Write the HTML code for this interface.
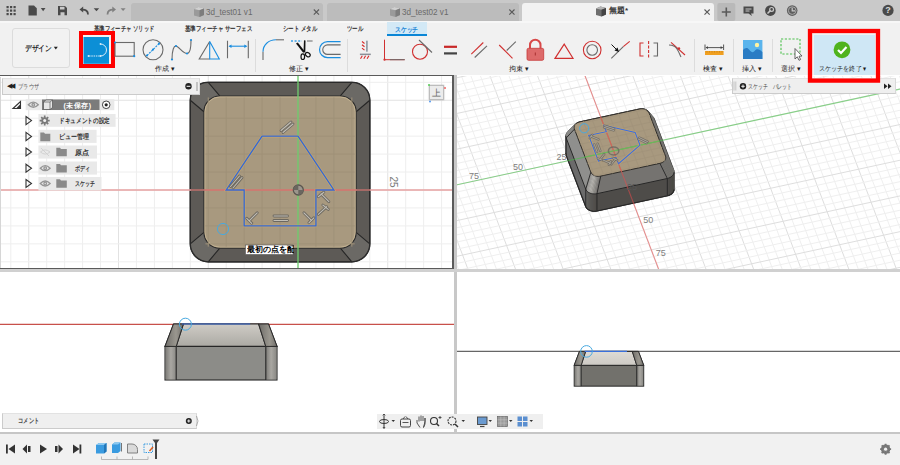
<!DOCTYPE html><html><head><meta charset="utf-8"><style>*{box-sizing:border-box;margin:0;padding:0}
html,body{width:900px;height:465px;overflow:hidden;background:#fff;font-family:"Liberation Sans",sans-serif;}
.a{position:absolute}
#top{left:0;top:0;width:900px;height:21px;background:#c9c9c9}
.tab{top:3px;height:18px;background:#bbbbbb;border-radius:3px 3px 0 0}
.tabt{font-size:9px;color:#6a6a6a;top:7px;white-space:nowrap;line-height:10px}
.x{font-size:9px;color:#555;top:5px;line-height:10px}
#rib{left:0;top:21px;width:900px;height:54px;background:#f1f1f1;border-top:2px solid #f7f7f7}
.rt{font-size:7px;color:#333;font-weight:bold;top:24px;line-height:9px;white-space:nowrap}
.gl{font-size:7px;color:#1a1a1a;top:64px;line-height:9px;white-space:nowrap}
.sep{width:1px;top:39px;height:33px;background:#dcdcdc}
#vsep{left:454px;top:75px;width:3px;height:357px;background:#c8c8c8}
#hsep{left:0;top:269px;width:900px;height:3px;background:#d0d0d0}
#tline{left:0;top:432px;width:900px;height:2px;background:#c6c6c6}
#tbar{left:0;top:434px;width:900px;height:31px;background:#f1f1f1}
.pnl{background:#efefef;border:1px solid;border-color:#e2e2e2 #d8d8d8 #cbcbcb #cbcbcb}
.tr{font-size:7px;color:#333;font-weight:bold;line-height:9px;white-space:nowrap}
.rowbg{background:#ececec}
</style></head><body>
<div class="a" id="top"></div>
<svg class="a" style="left:0;top:0" width="900" height="21">
<g fill="#4a4a4a">
<rect x="6.5" y="6" width="2.2" height="2.2"/><rect x="10" y="6" width="2.2" height="2.2"/><rect x="13.5" y="6" width="2.2" height="2.2"/>
<rect x="6.5" y="9.5" width="2.2" height="2.2"/><rect x="10" y="9.5" width="2.2" height="2.2"/><rect x="13.5" y="9.5" width="2.2" height="2.2"/>
<rect x="6.5" y="13" width="2.2" height="2.2"/><rect x="10" y="13" width="2.2" height="2.2"/><rect x="13.5" y="13" width="2.2" height="2.2"/>
<path d="M28.5 5.5 H34 L36.8 8.3 V15.5 H28.5 Z"/>
<path d="M40.8 8 H45.5 L43.15 11.2 Z"/>
<path d="M58 6 H65 L67 8 V15.3 H58 Z M60 6.8 V9.6 H64.5 V6.8 Z M60.5 12.2 V15.3 H64.5 V12.2 Z" fill-rule="evenodd"/>
<path d="M93.7 8.2 H99.2 L96.45 11.2 Z"/>
</g>
<path d="M88 14.5 C88 11 86 9.5 82 9.6" stroke="#4a4a4a" stroke-width="1.8" fill="none"/>
<path d="M79.5 9.6 L83.2 6.6 L83.2 12.6 Z" fill="#4a4a4a"/>
<path d="M107.5 14.5 C107.5 11 109.5 9.5 113.5 9.6" stroke="#808080" stroke-width="1.8" fill="none"/>
<path d="M116 9.6 L112.3 6.6 L112.3 12.6 Z" fill="#808080"/>
<path d="M120.6 8.2 H125.6 L123.1 11 Z" fill="#808080"/>
</svg>
<div class="a tab" style="left:131.4px;width:191.6px;background:#bcbcbc"></div>
<div class="a tab" style="left:327px;width:192px;background:#bcbcbc"></div>
<div class="a tab" style="left:522px;width:192.4px;background:#f2f2f2"></div>
<svg class="a" style="left:0;top:0" width="900" height="21">
<g>
<path d="M194 9 L198.5 7 L204 8.5 L204 15 L199.5 17 L194 15.5 Z" fill="#9a9a9a"/>
<path d="M194 9 L198.5 7 L204 8.5 L199.5 10.3 Z" fill="#d0d0d0"/>
<path d="M199.5 10.3 L204 8.5 L204 15 L199.5 17 Z" fill="#7d7d7d"/>
</g>
<g>
<path d="M390 9 L394.5 7 L400 8.5 L400 15 L395.5 17 L390 15.5 Z" fill="#9a9a9a"/>
<path d="M390 9 L394.5 7 L400 8.5 L395.5 10.3 Z" fill="#d0d0d0"/>
<path d="M395.5 10.3 L400 8.5 L400 15 L395.5 17 Z" fill="#7d7d7d"/>
</g>
<g>
<path d="M596 8.5 L600.5 6.5 L606 8 L606 14.5 L601.5 16.5 L596 15 Z" fill="#6e6e6e"/>
<path d="M596 8.5 L600.5 6.5 L606 8 L601.5 9.8 Z" fill="#b5b5b5"/>
<path d="M601.5 9.8 L606 8 L606 14.5 L601.5 16.5 Z" fill="#444"/>
</g>
<g stroke="#5a5a5a" stroke-width="1.1">
<path d="M313.8 9.5 L319 14.7 M319 9.5 L313.8 14.7"/>
<path d="M509.3 9.5 L514.5 14.7 M514.5 9.5 L509.3 14.7"/>
<path d="M704.5 9.5 L709.7 14.7 M709.7 9.5 L704.5 14.7"/>
</g>
<rect x="717.3" y="3" width="18" height="18" rx="2" fill="#b9b9b9"/>
<path d="M726.3 7.5 V16.5 M721.8 12 H730.8" stroke="#5a5a5a" stroke-width="1.6"/>
<path d="M743.5 6.5 H753.5 V13.5 H751 L752 16 L748.5 13.5 H743.5 Z" fill="#4a4a4a"/>
<path d="M745.5 9 H751.5 M745.5 11 H749.5" stroke="#c9c9c9" stroke-width="1"/>
<circle cx="770.4" cy="10.6" r="5.3" fill="#4a4a4a"/>
<path d="M767.5 13.5 L770.6 10.4" stroke="#c9c9c9" stroke-width="1.5"/>
<circle cx="771.6" cy="9.4" r="1.9" fill="none" stroke="#c9c9c9" stroke-width="1.2"/>
<circle cx="792.2" cy="10.6" r="5.3" fill="#5e5e5e"/>
<circle cx="792.2" cy="10.6" r="3.8" fill="none" stroke="#b9b9b9" stroke-width="0.8"/>
<path d="M792.2 7.8 V10.8 H795" stroke="#c9c9c9" stroke-width="1.2" fill="none"/>
<circle cx="888" cy="10.4" r="5.6" fill="#4a4a4a"/>
</svg>
<div class="a tabt" style="left:206.3px;transform:scaleX(0.9);transform-origin:0 0">3d_test01 v1</div>
<div class="a tabt" style="left:401.7px;transform:scaleX(0.9);transform-origin:0 0">3d_test02 v1</div>
<div class="a tabt" style="left:609px;color:#333;font-size:8px;top:6px;font-weight:bold">無題*</div>
<div class="a" style="left:885.3px;top:5px;font-size:9px;font-weight:bold;color:#dcdcdc;line-height:11px">?</div>

<div class="a" id="rib"></div>
<div class="a rt" style="left:94px;transform:scaleX(0.763);transform-origin:0 0">基準フィーチャ ソリッド</div>
<div class="a rt" style="left:185px;transform:scaleX(0.78);transform-origin:0 0">基準フィーチャ サーフェス</div>
<div class="a rt" style="left:282.7px;transform:scaleX(0.78);transform-origin:0 0">シート メタル</div>
<div class="a rt" style="left:346.7px;transform:scaleX(0.78);transform-origin:0 0">ツール</div>
<div class="a" style="left:387.3px;top:22px;width:39.7px;height:14px;background:#d3e9f6;border-bottom:2.3px solid #0a86d6"></div>
<div class="a rt" style="left:394.7px;top:25px;color:#1a86d6;font-weight:bold;transform:scaleX(0.83);transform-origin:0 0">スケッチ</div>
<div class="a" style="left:12px;top:28px;width:58px;height:40px;border:1px solid #dcdcdc;border-radius:3px;background:#f2f2f2"></div>
<div class="a" style="left:25px;top:43.5px;font-size:7.5px;font-weight:bold;color:#222;line-height:9px;white-space:nowrap;transform:scaleX(0.84);transform-origin:0 0">デザイン</div><svg class="a" style="left:53px;top:46px" width="6" height="5"><path d="M0.8 0.8 H4.8 L2.8 3.6 Z" fill="#222"/></svg>
<div class="a sep" style="left:255px"></div>
<div class="a sep" style="left:347px"></div>
<div class="a sep" style="left:694px"></div>
<div class="a sep" style="left:733px"></div>
<div class="a sep" style="left:772px"></div>
<div class="a gl" style="left:155px">作成 ▾</div>
<div class="a gl" style="left:289px">修正 ▾</div>
<div class="a gl" style="left:509px">拘束 ▾</div>
<div class="a gl" style="left:703px">検査 ▾</div>
<div class="a gl" style="left:742px">挿入 ▾</div>
<div class="a gl" style="left:781px">選択 ▾</div>
<div class="a" style="left:813.5px;top:34.5px;width:61px;height:40.5px;background:#cfe7f5"></div>
<div class="a gl" style="left:819px;top:64px;transform:scaleX(0.87);transform-origin:0 0">スケッチを終了 ▾</div>
<svg class="a" style="left:0;top:0" width="900" height="90">
<!-- finish check -->
<circle cx="842" cy="49.8" r="8.4" fill="#4fb31d"/>
<path d="M838 50 L841 53 L846.5 47" stroke="#fff" stroke-width="2.2" fill="none"/>
<!-- red boxes -->
<rect x="81" y="33" width="32" height="33" fill="none" stroke="#ff0000" stroke-width="4"/>
<rect x="83.5" y="37" width="25.5" height="26.8" fill="#0c8fd6"/>
<path d="M89 56 H100" stroke="#d8ecf8" stroke-width="1" stroke-dasharray="1.5 0.8"/>
<circle cx="88.5" cy="56" r="0.9" fill="#d8ecf8"/><circle cx="100.5" cy="56" r="0.9" fill="#d8ecf8"/><circle cx="100.5" cy="44" r="0.9" fill="#d8ecf8"/>
<path d="M100.5 44 A6 6 0 0 1 100.5 56" stroke="#d8ecf8" stroke-width="1" fill="none"/>

<!-- create icons -->
<rect x="115" y="42.5" width="19.2" height="13.7" fill="none" stroke="#6a6a6a" stroke-width="1.1"/>
<circle cx="115" cy="42.5" r="1.1" fill="#1a8ee0"/><circle cx="134.2" cy="56.2" r="1.1" fill="#1a8ee0"/>
<circle cx="153" cy="49.7" r="10" fill="none" stroke="#6a6a6a" stroke-width="1.1"/>
<path d="M147 55.5 L159 43.7" stroke="#1a8ee0" stroke-width="1.1" stroke-dasharray="2 1"/>
<circle cx="147" cy="55.5" r="1.1" fill="#1a8ee0"/><circle cx="153" cy="49.6" r="1.1" fill="#1a8ee0"/><circle cx="159" cy="43.7" r="1.1" fill="#1a8ee0"/>
<path d="M172 59.5 C172 50 174 45.5 176 46 C179 46.5 183 53.5 187 53.5 C190 53.5 191 47 191 40" stroke="#6a6a6a" stroke-width="1.1" fill="none"/>
<circle cx="172" cy="59.5" r="1.1" fill="#1a8ee0"/><circle cx="176" cy="46" r="1.1" fill="#1a8ee0"/><circle cx="187" cy="53.5" r="1.1" fill="#1a8ee0"/><circle cx="191" cy="40" r="1.1" fill="#1a8ee0"/>
<path d="M209.7 41.5 L199.2 59 H209.7" stroke="#6a6a6a" stroke-width="1.1" fill="none"/>
<path d="M209.7 41.5 L219.3 59 H209.7 Z" stroke="#1a8ee0" stroke-width="1.1" fill="none"/>
<path d="M227.5 40.8 V58.3 M248.3 40.8 V58.3" stroke="#6a6a6a" stroke-width="1.1"/>
<path d="M229.5 46.2 H246.3" stroke="#1a8ee0" stroke-width="1.1"/>
<path d="M228.5 46.2 L231.5 44.4 V48 Z M247.3 46.2 L244.3 44.4 V48 Z" fill="#1a8ee0"/>
<!-- modify -->
<path d="M276 39.8 H284" stroke="#6a6a6a" stroke-width="1.1"/>
<path d="M263 51.7 V60" stroke="#6a6a6a" stroke-width="1.1"/>
<path d="M276 39.8 C268.5 39.8 263 45 263 51.7" stroke="#1a8ee0" stroke-width="1.1" fill="none"/>
<path d="M291 41 H302" stroke="#3aa0e8" stroke-width="1.3" stroke-dasharray="2 1.6"/>
<path d="M307 41 H312.6" stroke="#888" stroke-width="1.3"/>
<path d="M296 43.5 L297.8 42.6 L304.8 51.5 L303.2 52.8 Z" fill="#111"/>
<path d="M304 40.3 L305.5 40.6 L305.3 52.5 L303.5 52.2 Z" fill="#111"/>
<ellipse cx="302.8" cy="56.7" rx="1.8" ry="2.8" fill="none" stroke="#111" stroke-width="1.2"/>
<ellipse cx="307.8" cy="54.6" rx="2.6" ry="1.9" fill="none" stroke="#111" stroke-width="1.2" transform="rotate(35 307.8 54.6)"/>
<path d="M340.6 41.7 H327.5 A7.95 7.95 0 0 0 327.5 57.6 H340.6" stroke="#1a8ee0" stroke-width="1.2" fill="none"/>
<path d="M340.6 44.9 H327.5 A4.75 4.75 0 0 0 327.5 54.4 H340.6" stroke="#6a6a6a" stroke-width="1.1" fill="none"/>
<!-- constraints -->
<rect x="366" y="40.7" width="1.8" height="11" fill="#98a0a8"/>
<rect x="359.9" y="53.6" width="10.9" height="1.5" fill="#8a9098"/>
<path d="M362 41.5 L364.5 43.5 M362 44.8 L364.5 46.8 M362 48.1 L364.5 50.1 M360.5 58.8 L362.3 55.8 M363.8 58.8 L365.6 55.8 M367.1 58.8 L368.9 55.8" stroke="#d82828" stroke-width="1.1"/>
<path d="M384.5 39.7 V59.7 H404.7" stroke="#d03030" stroke-width="1" fill="none"/>
<path d="M390 59.7 H404.7" stroke="#6a6a6a" stroke-width="1"/>
<circle cx="384.5" cy="59.7" r="1.1" fill="#d03030"/>
<circle cx="420" cy="51.7" r="7.5" fill="none" stroke="#d03030" stroke-width="1.1"/>
<path d="M419 40 L432 52.5" stroke="#6a6a6a" stroke-width="1.1"/>
<rect x="444" y="45.7" width="13" height="2.2" fill="#c82828"/>
<rect x="444" y="52.3" width="13" height="2.2" fill="#444"/>
<path d="M471.3 54.2 L483.3 42.5" stroke="#d03030" stroke-width="1.1"/>
<path d="M474.7 57.5 L487 45.8" stroke="#6a6a6a" stroke-width="1.1"/>
<path d="M499.2 45 L512.5 58.3" stroke="#d03030" stroke-width="1.1"/>
<path d="M506.7 50.5 L515.8 41.7" stroke="#6a6a6a" stroke-width="1.1"/>
<path d="M530 48.5 V45 A5 5 0 0 1 540.5 45 V48.5" stroke="#d84848" stroke-width="2" fill="none"/>
<rect x="527" y="48.3" width="16.7" height="12" rx="1.5" fill="#dd6a6a" stroke="#c83a3a" stroke-width="0.8"/>
<path d="M535.3 52.5 V55.5" stroke="#a83030" stroke-width="1"/>
<path d="M555 58.3 L564.2 44.2 L573 58.3 Z" stroke="#d03030" stroke-width="1.2" fill="none"/>
<circle cx="592.2" cy="50" r="8.8" fill="none" stroke="#d03030" stroke-width="1.1"/>
<circle cx="592.2" cy="50" r="5.3" fill="none" stroke="#6a6a6a" stroke-width="1.1"/>
<path d="M611.3 58.3 L623.3 46.7" stroke="#6a6a6a" stroke-width="1.1"/>
<path d="M623.3 46.7 L629.7 41.3" stroke="#d03030" stroke-width="1.1"/>
<path d="M611.5 44.5 L617 50" stroke="#111" stroke-width="1"/>
<path d="M619 52 L614.5 50.5 L617.5 47.5 Z" fill="#111"/>
<path d="M643.5 43 H640 V56 H643.5" stroke="#d03030" stroke-width="1.1" fill="none"/>
<path d="M648.6 41 V59" stroke="#d03030" stroke-width="1.1" stroke-dasharray="3 1.5"/>
<path d="M653.5 43 H657.5 V56 H653.5" stroke="#6a6a6a" stroke-width="1.1" fill="none"/>
<path d="M671 42.4 L685 55" stroke="#d03030" stroke-width="1.1"/>
<path d="M669 45 C673 45 675 46 677 49 C679 52 680 55 681 57" stroke="#6a6a6a" stroke-width="1.1" fill="none"/>
<circle cx="679" cy="48.4" r="1.2" fill="#d03030"/>
<!-- inspect -->
<path d="M705 44.5 V50 M723.6 44.5 V50" stroke="#444" stroke-width="0.9"/>
<path d="M706 47.6 H722.6" stroke="#444" stroke-width="0.9"/>
<path d="M705.5 47.6 L708 46.3 V48.9 Z M723.1 47.6 L720.6 46.3 V48.9 Z" fill="#444"/>
<rect x="705" y="51" width="18.6" height="4" fill="#f0a020"/>
<path d="M707 51 V52.5 M709.5 51 V52.5 M712 51 V52.5 M714.5 51 V52.5 M717 51 V52.5 M719.5 51 V52.5 M722 51 V52.5" stroke="#b87010" stroke-width="0.5"/>
<!-- insert -->
<rect x="743" y="40" width="19.4" height="19" fill="#5ab4ec"/>
<path d="M743 59 V50 C745 47.5 747.5 47 749.5 50 C751.5 52.5 753 53 755 50.5 C757 48 760 49.5 762.4 52 V59 Z" fill="#2a7cc4"/>
<circle cx="757" cy="45" r="2.2" fill="#fff3a0"/>
<!-- select -->
<rect x="781" y="39" width="19" height="15" fill="none" stroke="#4cc04c" stroke-width="1.1" stroke-dasharray="2.2 1.6"/>
<path d="M795 48.5 V59 L797.3 56.8 L799 60.3 L800.6 59.5 L799 56.2 L802 56 Z" fill="#fff" stroke="#555" stroke-width="0.9"/>
</svg>

<svg class="a" style="left:0;top:0" width="900" height="465">
<rect x="0" y="75" width="454" height="357" fill="#fff"/>
<rect x="457" y="75" width="443" height="357" fill="#fff"/>
<line x1="10.80" y1="76" x2="10.80" y2="269" stroke="#eeeeee" stroke-width="1"/>
<line x1="28.75" y1="76" x2="28.75" y2="269" stroke="#e2e2e2" stroke-width="1"/>
<line x1="46.70" y1="76" x2="46.70" y2="269" stroke="#eeeeee" stroke-width="1"/>
<line x1="64.65" y1="76" x2="64.65" y2="269" stroke="#eeeeee" stroke-width="1"/>
<line x1="82.60" y1="76" x2="82.60" y2="269" stroke="#eeeeee" stroke-width="1"/>
<line x1="100.55" y1="76" x2="100.55" y2="269" stroke="#eeeeee" stroke-width="1"/>
<line x1="118.50" y1="76" x2="118.50" y2="269" stroke="#e2e2e2" stroke-width="1"/>
<line x1="136.45" y1="76" x2="136.45" y2="269" stroke="#eeeeee" stroke-width="1"/>
<line x1="154.40" y1="76" x2="154.40" y2="269" stroke="#eeeeee" stroke-width="1"/>
<line x1="172.35" y1="76" x2="172.35" y2="269" stroke="#eeeeee" stroke-width="1"/>
<line x1="190.30" y1="76" x2="190.30" y2="269" stroke="#eeeeee" stroke-width="1"/>
<line x1="208.25" y1="76" x2="208.25" y2="269" stroke="#e2e2e2" stroke-width="1"/>
<line x1="226.20" y1="76" x2="226.20" y2="269" stroke="#eeeeee" stroke-width="1"/>
<line x1="244.15" y1="76" x2="244.15" y2="269" stroke="#eeeeee" stroke-width="1"/>
<line x1="262.10" y1="76" x2="262.10" y2="269" stroke="#eeeeee" stroke-width="1"/>
<line x1="280.05" y1="76" x2="280.05" y2="269" stroke="#eeeeee" stroke-width="1"/>
<line x1="298.00" y1="76" x2="298.00" y2="269" stroke="#e2e2e2" stroke-width="1"/>
<line x1="315.95" y1="76" x2="315.95" y2="269" stroke="#eeeeee" stroke-width="1"/>
<line x1="333.90" y1="76" x2="333.90" y2="269" stroke="#eeeeee" stroke-width="1"/>
<line x1="351.85" y1="76" x2="351.85" y2="269" stroke="#eeeeee" stroke-width="1"/>
<line x1="369.80" y1="76" x2="369.80" y2="269" stroke="#eeeeee" stroke-width="1"/>
<line x1="387.75" y1="76" x2="387.75" y2="269" stroke="#e2e2e2" stroke-width="1"/>
<line x1="405.70" y1="76" x2="405.70" y2="269" stroke="#eeeeee" stroke-width="1"/>
<line x1="423.65" y1="76" x2="423.65" y2="269" stroke="#eeeeee" stroke-width="1"/>
<line x1="441.60" y1="76" x2="441.60" y2="269" stroke="#eeeeee" stroke-width="1"/>
<line x1="0" y1="82.30" x2="454" y2="82.30" stroke="#eeeeee" stroke-width="1"/>
<line x1="0" y1="100.25" x2="454" y2="100.25" stroke="#e2e2e2" stroke-width="1"/>
<line x1="0" y1="118.20" x2="454" y2="118.20" stroke="#eeeeee" stroke-width="1"/>
<line x1="0" y1="136.15" x2="454" y2="136.15" stroke="#eeeeee" stroke-width="1"/>
<line x1="0" y1="154.10" x2="454" y2="154.10" stroke="#eeeeee" stroke-width="1"/>
<line x1="0" y1="172.05" x2="454" y2="172.05" stroke="#eeeeee" stroke-width="1"/>
<line x1="0" y1="190.00" x2="454" y2="190.00" stroke="#e2e2e2" stroke-width="1"/>
<line x1="0" y1="207.95" x2="454" y2="207.95" stroke="#eeeeee" stroke-width="1"/>
<line x1="0" y1="225.90" x2="454" y2="225.90" stroke="#eeeeee" stroke-width="1"/>
<line x1="0" y1="243.85" x2="454" y2="243.85" stroke="#eeeeee" stroke-width="1"/>
<line x1="0" y1="261.80" x2="454" y2="261.80" stroke="#eeeeee" stroke-width="1"/>
<svg x="457" y="76" width="443" height="193" viewBox="457 76 443 193"><line x1="885.40" y1="-36.59" x2="1000.40" y2="267.01" stroke="#efefef" stroke-width="1"/>
<line x1="876.60" y1="-34.68" x2="991.60" y2="268.92" stroke="#dedede" stroke-width="1"/>
<line x1="867.80" y1="-32.77" x2="982.80" y2="270.83" stroke="#efefef" stroke-width="1"/>
<line x1="859.00" y1="-30.86" x2="974.00" y2="272.74" stroke="#efefef" stroke-width="1"/>
<line x1="850.20" y1="-28.96" x2="965.20" y2="274.64" stroke="#efefef" stroke-width="1"/>
<line x1="841.40" y1="-27.05" x2="956.40" y2="276.55" stroke="#efefef" stroke-width="1"/>
<line x1="832.60" y1="-25.14" x2="947.60" y2="278.46" stroke="#dedede" stroke-width="1"/>
<line x1="823.80" y1="-23.23" x2="938.80" y2="280.37" stroke="#efefef" stroke-width="1"/>
<line x1="815.00" y1="-21.32" x2="930.00" y2="282.28" stroke="#efefef" stroke-width="1"/>
<line x1="806.20" y1="-19.42" x2="921.20" y2="284.18" stroke="#efefef" stroke-width="1"/>
<line x1="797.40" y1="-17.51" x2="912.40" y2="286.09" stroke="#efefef" stroke-width="1"/>
<line x1="788.60" y1="-15.60" x2="903.60" y2="288.00" stroke="#dedede" stroke-width="1"/>
<line x1="779.80" y1="-13.69" x2="894.80" y2="289.91" stroke="#efefef" stroke-width="1"/>
<line x1="771.00" y1="-11.78" x2="886.00" y2="291.82" stroke="#efefef" stroke-width="1"/>
<line x1="762.20" y1="-9.88" x2="877.20" y2="293.72" stroke="#efefef" stroke-width="1"/>
<line x1="753.40" y1="-7.97" x2="868.40" y2="295.63" stroke="#efefef" stroke-width="1"/>
<line x1="744.60" y1="-6.06" x2="859.60" y2="297.54" stroke="#dedede" stroke-width="1"/>
<line x1="735.80" y1="-4.15" x2="850.80" y2="299.45" stroke="#efefef" stroke-width="1"/>
<line x1="727.00" y1="-2.24" x2="842.00" y2="301.36" stroke="#efefef" stroke-width="1"/>
<line x1="718.20" y1="-0.34" x2="833.20" y2="303.26" stroke="#efefef" stroke-width="1"/>
<line x1="709.40" y1="1.57" x2="824.40" y2="305.17" stroke="#efefef" stroke-width="1"/>
<line x1="700.60" y1="3.48" x2="815.60" y2="307.08" stroke="#dedede" stroke-width="1"/>
<line x1="691.80" y1="5.39" x2="806.80" y2="308.99" stroke="#efefef" stroke-width="1"/>
<line x1="683.00" y1="7.30" x2="798.00" y2="310.90" stroke="#efefef" stroke-width="1"/>
<line x1="674.20" y1="9.20" x2="789.20" y2="312.80" stroke="#efefef" stroke-width="1"/>
<line x1="665.40" y1="11.11" x2="780.40" y2="314.71" stroke="#efefef" stroke-width="1"/>
<line x1="656.60" y1="13.02" x2="771.60" y2="316.62" stroke="#dedede" stroke-width="1"/>
<line x1="647.80" y1="14.93" x2="762.80" y2="318.53" stroke="#efefef" stroke-width="1"/>
<line x1="639.00" y1="16.84" x2="754.00" y2="320.44" stroke="#efefef" stroke-width="1"/>
<line x1="630.20" y1="18.74" x2="745.20" y2="322.34" stroke="#efefef" stroke-width="1"/>
<line x1="621.40" y1="20.65" x2="736.40" y2="324.25" stroke="#efefef" stroke-width="1"/>
<line x1="612.60" y1="22.56" x2="727.60" y2="326.16" stroke="#dedede" stroke-width="1"/>
<line x1="603.80" y1="24.47" x2="718.80" y2="328.07" stroke="#efefef" stroke-width="1"/>
<line x1="595.00" y1="26.38" x2="710.00" y2="329.98" stroke="#efefef" stroke-width="1"/>
<line x1="586.20" y1="28.28" x2="701.20" y2="331.88" stroke="#efefef" stroke-width="1"/>
<line x1="577.40" y1="30.19" x2="692.40" y2="333.79" stroke="#efefef" stroke-width="1"/>
<line x1="568.60" y1="32.10" x2="683.60" y2="335.70" stroke="#dedede" stroke-width="1"/>
<line x1="559.80" y1="34.01" x2="674.80" y2="337.61" stroke="#efefef" stroke-width="1"/>
<line x1="551.00" y1="35.92" x2="666.00" y2="339.52" stroke="#efefef" stroke-width="1"/>
<line x1="542.20" y1="37.82" x2="657.20" y2="341.42" stroke="#efefef" stroke-width="1"/>
<line x1="533.40" y1="39.73" x2="648.40" y2="343.33" stroke="#efefef" stroke-width="1"/>
<line x1="524.60" y1="41.64" x2="639.60" y2="345.24" stroke="#dedede" stroke-width="1"/>
<line x1="515.80" y1="43.55" x2="630.80" y2="347.15" stroke="#efefef" stroke-width="1"/>
<line x1="507.00" y1="45.46" x2="622.00" y2="349.06" stroke="#efefef" stroke-width="1"/>
<line x1="498.20" y1="47.36" x2="613.20" y2="350.96" stroke="#efefef" stroke-width="1"/>
<line x1="489.40" y1="49.27" x2="604.40" y2="352.87" stroke="#efefef" stroke-width="1"/>
<line x1="480.60" y1="51.18" x2="595.60" y2="354.78" stroke="#dedede" stroke-width="1"/>
<line x1="471.80" y1="53.09" x2="586.80" y2="356.69" stroke="#efefef" stroke-width="1"/>
<line x1="463.00" y1="55.00" x2="578.00" y2="358.60" stroke="#efefef" stroke-width="1"/>
<line x1="454.20" y1="56.90" x2="569.20" y2="360.50" stroke="#efefef" stroke-width="1"/>
<line x1="445.40" y1="58.81" x2="560.40" y2="362.41" stroke="#efefef" stroke-width="1"/>
<line x1="436.60" y1="60.72" x2="551.60" y2="364.32" stroke="#dedede" stroke-width="1"/>
<line x1="427.80" y1="62.63" x2="542.80" y2="366.23" stroke="#efefef" stroke-width="1"/>
<line x1="419.00" y1="64.54" x2="534.00" y2="368.14" stroke="#efefef" stroke-width="1"/>
<line x1="410.20" y1="66.44" x2="525.20" y2="370.04" stroke="#efefef" stroke-width="1"/>
<line x1="401.40" y1="68.35" x2="516.40" y2="371.95" stroke="#efefef" stroke-width="1"/>
<line x1="392.60" y1="70.26" x2="507.60" y2="373.86" stroke="#dedede" stroke-width="1"/>
<line x1="383.80" y1="72.17" x2="498.80" y2="375.77" stroke="#efefef" stroke-width="1"/>
<line x1="375.00" y1="74.08" x2="490.00" y2="377.68" stroke="#efefef" stroke-width="1"/>
<line x1="366.20" y1="75.98" x2="481.20" y2="379.58" stroke="#efefef" stroke-width="1"/>
<line x1="885.40" y1="-36.59" x2="357.40" y2="77.89" stroke="#efefef" stroke-width="1"/>
<line x1="887.90" y1="-29.99" x2="359.90" y2="84.49" stroke="#efefef" stroke-width="1"/>
<line x1="890.40" y1="-23.39" x2="362.40" y2="91.09" stroke="#efefef" stroke-width="1"/>
<line x1="892.90" y1="-16.79" x2="364.90" y2="97.69" stroke="#dedede" stroke-width="1"/>
<line x1="895.40" y1="-10.19" x2="367.40" y2="104.29" stroke="#efefef" stroke-width="1"/>
<line x1="897.90" y1="-3.59" x2="369.90" y2="110.89" stroke="#efefef" stroke-width="1"/>
<line x1="900.40" y1="3.01" x2="372.40" y2="117.49" stroke="#efefef" stroke-width="1"/>
<line x1="902.90" y1="9.61" x2="374.90" y2="124.09" stroke="#efefef" stroke-width="1"/>
<line x1="905.40" y1="16.21" x2="377.40" y2="130.69" stroke="#dedede" stroke-width="1"/>
<line x1="907.90" y1="22.81" x2="379.90" y2="137.29" stroke="#efefef" stroke-width="1"/>
<line x1="910.40" y1="29.41" x2="382.40" y2="143.89" stroke="#efefef" stroke-width="1"/>
<line x1="912.90" y1="36.01" x2="384.90" y2="150.49" stroke="#efefef" stroke-width="1"/>
<line x1="915.40" y1="42.61" x2="387.40" y2="157.09" stroke="#efefef" stroke-width="1"/>
<line x1="917.90" y1="49.21" x2="389.90" y2="163.69" stroke="#dedede" stroke-width="1"/>
<line x1="920.40" y1="55.81" x2="392.40" y2="170.29" stroke="#efefef" stroke-width="1"/>
<line x1="922.90" y1="62.41" x2="394.90" y2="176.89" stroke="#efefef" stroke-width="1"/>
<line x1="925.40" y1="69.01" x2="397.40" y2="183.49" stroke="#efefef" stroke-width="1"/>
<line x1="927.90" y1="75.61" x2="399.90" y2="190.09" stroke="#efefef" stroke-width="1"/>
<line x1="930.40" y1="82.21" x2="402.40" y2="196.69" stroke="#dedede" stroke-width="1"/>
<line x1="932.90" y1="88.81" x2="404.90" y2="203.29" stroke="#efefef" stroke-width="1"/>
<line x1="935.40" y1="95.41" x2="407.40" y2="209.89" stroke="#efefef" stroke-width="1"/>
<line x1="937.90" y1="102.01" x2="409.90" y2="216.49" stroke="#efefef" stroke-width="1"/>
<line x1="940.40" y1="108.61" x2="412.40" y2="223.09" stroke="#efefef" stroke-width="1"/>
<line x1="942.90" y1="115.21" x2="414.90" y2="229.69" stroke="#dedede" stroke-width="1"/>
<line x1="945.40" y1="121.81" x2="417.40" y2="236.29" stroke="#efefef" stroke-width="1"/>
<line x1="947.90" y1="128.41" x2="419.90" y2="242.89" stroke="#efefef" stroke-width="1"/>
<line x1="950.40" y1="135.01" x2="422.40" y2="249.49" stroke="#efefef" stroke-width="1"/>
<line x1="952.90" y1="141.61" x2="424.90" y2="256.09" stroke="#efefef" stroke-width="1"/>
<line x1="955.40" y1="148.21" x2="427.40" y2="262.69" stroke="#dedede" stroke-width="1"/>
<line x1="957.90" y1="154.81" x2="429.90" y2="269.29" stroke="#efefef" stroke-width="1"/>
<line x1="960.40" y1="161.41" x2="432.40" y2="275.89" stroke="#efefef" stroke-width="1"/>
<line x1="962.90" y1="168.01" x2="434.90" y2="282.49" stroke="#efefef" stroke-width="1"/>
<line x1="965.40" y1="174.61" x2="437.40" y2="289.09" stroke="#efefef" stroke-width="1"/>
<line x1="967.90" y1="181.21" x2="439.90" y2="295.69" stroke="#dedede" stroke-width="1"/>
<line x1="970.40" y1="187.81" x2="442.40" y2="302.29" stroke="#efefef" stroke-width="1"/>
<line x1="972.90" y1="194.41" x2="444.90" y2="308.89" stroke="#efefef" stroke-width="1"/>
<line x1="975.40" y1="201.01" x2="447.40" y2="315.49" stroke="#efefef" stroke-width="1"/>
<line x1="977.90" y1="207.61" x2="449.90" y2="322.09" stroke="#efefef" stroke-width="1"/>
<line x1="980.40" y1="214.21" x2="452.40" y2="328.69" stroke="#dedede" stroke-width="1"/>
<line x1="982.90" y1="220.81" x2="454.90" y2="335.29" stroke="#efefef" stroke-width="1"/>
<line x1="985.40" y1="227.41" x2="457.40" y2="341.89" stroke="#efefef" stroke-width="1"/>
<line x1="987.90" y1="234.01" x2="459.90" y2="348.49" stroke="#efefef" stroke-width="1"/>
<line x1="990.40" y1="240.61" x2="462.40" y2="355.09" stroke="#efefef" stroke-width="1"/>
<line x1="992.90" y1="247.21" x2="464.90" y2="361.69" stroke="#dedede" stroke-width="1"/>
<line x1="995.40" y1="253.81" x2="467.40" y2="368.29" stroke="#efefef" stroke-width="1"/>
<line x1="997.90" y1="260.41" x2="469.90" y2="374.89" stroke="#efefef" stroke-width="1"/></svg>
<g>
<rect x="190.30" y="82.30" width="179.50" height="179.50" rx="17.95" fill="#5d5a56" stroke="#2a2a2a" stroke-width="1.3"/>
<path d="M203.94 111.74 L190.30 100.25 C190.30 90.34 198.34 82.30 208.25 82.30 L219.74 95.94 C211.01 95.94 203.94 103.01 203.94 111.74 Z" fill="#6b6965"/>
<path d="M203.94 111.74 L190.30 100.25 M219.74 95.94 L208.25 82.30" stroke="#262626" stroke-width="1.1"/>
<path d="M356.16 111.74 L369.80 100.25 C369.80 90.34 361.76 82.30 351.85 82.30 L340.36 95.94 C349.09 95.94 356.16 103.01 356.16 111.74 Z" fill="#6b6965"/>
<path d="M356.16 111.74 L369.80 100.25 M340.36 95.94 L351.85 82.30" stroke="#262626" stroke-width="1.1"/>
<path d="M203.94 232.36 L190.30 243.85 C190.30 253.76 198.34 261.80 208.25 261.80 L219.74 248.16 C211.01 248.16 203.94 241.09 203.94 232.36 Z" fill="#6b6965"/>
<path d="M203.94 232.36 L190.30 243.85 M219.74 248.16 L208.25 261.80" stroke="#262626" stroke-width="1.1"/>
<path d="M356.16 232.36 L369.80 243.85 C369.80 253.76 361.76 261.80 351.85 261.80 L340.36 248.16 C349.09 248.16 356.16 241.09 356.16 232.36 Z" fill="#6b6965"/>
<path d="M356.16 232.36 L369.80 243.85 M340.36 248.16 L351.85 261.80" stroke="#262626" stroke-width="1.1"/>
<rect x="190.30" y="82.30" width="179.50" height="179.50" rx="17.95" fill="none" stroke="#2a2a2a" stroke-width="1.3"/>
<rect x="203.94" y="95.94" width="152.22" height="152.22" rx="15.80" fill="#a8997f" stroke="#2a2a2a" stroke-width="1.1"/>
<rect x="204.94" y="96.94" width="150.22" height="150.22" rx="14.80" fill="none" stroke="#c9b997" stroke-width="0.8"/>
<line x1="208.25" y1="97.44" x2="208.25" y2="246.66" stroke="#9f9178" stroke-width="1"/>
<line x1="226.20" y1="97.44" x2="226.20" y2="246.66" stroke="#9f9178" stroke-width="1"/>
<line x1="244.15" y1="97.44" x2="244.15" y2="246.66" stroke="#9f9178" stroke-width="1"/>
<line x1="262.10" y1="97.44" x2="262.10" y2="246.66" stroke="#9f9178" stroke-width="1"/>
<line x1="280.05" y1="97.44" x2="280.05" y2="246.66" stroke="#9f9178" stroke-width="1"/>
<line x1="298.00" y1="97.44" x2="298.00" y2="246.66" stroke="#9f9178" stroke-width="1"/>
<line x1="315.95" y1="97.44" x2="315.95" y2="246.66" stroke="#9f9178" stroke-width="1"/>
<line x1="333.90" y1="97.44" x2="333.90" y2="246.66" stroke="#9f9178" stroke-width="1"/>
<line x1="351.85" y1="97.44" x2="351.85" y2="246.66" stroke="#9f9178" stroke-width="1"/>
<line x1="205.44" y1="118.20" x2="354.66" y2="118.20" stroke="#9f9178" stroke-width="1"/>
<line x1="205.44" y1="136.15" x2="354.66" y2="136.15" stroke="#9f9178" stroke-width="1"/>
<line x1="205.44" y1="154.10" x2="354.66" y2="154.10" stroke="#9f9178" stroke-width="1"/>
<line x1="205.44" y1="172.05" x2="354.66" y2="172.05" stroke="#9f9178" stroke-width="1"/>
<line x1="205.44" y1="190.00" x2="354.66" y2="190.00" stroke="#9f9178" stroke-width="1"/>
<line x1="205.44" y1="207.95" x2="354.66" y2="207.95" stroke="#9f9178" stroke-width="1"/>
<line x1="205.44" y1="225.90" x2="354.66" y2="225.90" stroke="#9f9178" stroke-width="1"/>
<line x1="205.44" y1="243.85" x2="354.66" y2="243.85" stroke="#9f9178" stroke-width="1"/>
<line x1="0" y1="190" x2="454" y2="190" stroke="#e8a3a3" stroke-width="1.3"/>
<line x1="204.5" y1="190" x2="356.5" y2="190" stroke="#c05a4c" stroke-width="1.2"/>
<line x1="191" y1="190" x2="204.5" y2="190" stroke="#8a4a44" stroke-width="1.1"/><line x1="356.5" y1="190" x2="370" y2="190" stroke="#8a4a44" stroke-width="1.1"/>
<line x1="298" y1="76" x2="298" y2="269" stroke="#6fcf6f" stroke-width="1.3"/>
<polygon points="262.10,136.15 298.00,136.15 333.90,190.00 315.95,190.00 315.95,225.90 244.15,225.90 244.15,190.00 226.20,190.00" fill="none" stroke="#e0b060" stroke-width="2.55" stroke-opacity="0.55" stroke-linejoin="miter"/>
<polygon points="262.10,136.15 298.00,136.15 333.90,190.00 315.95,190.00 315.95,225.90 244.15,225.90 244.15,190.00 226.20,190.00" fill="none" stroke="#3268d6" stroke-width="1.35" stroke-linejoin="miter"/>
<circle cx="298.3" cy="190" r="5" fill="#9c968c" stroke="#5a5650" stroke-width="1.3"/>
<path d="M298.3 190 V185 A5 5 0 0 0 293.3 190 Z M298.3 190 V195 A5 5 0 0 0 303.3 190 Z" fill="#6a665f"/>
<path d="M246.70 218.30 L251.70 223.30" stroke="#6c6860" stroke-width="2.8" stroke-linecap="round" fill="none"/>
<path d="M249.20 220.80 L257.20 212.80" stroke="#6c6860" stroke-width="2.8" stroke-linecap="round" fill="none"/>
<path d="M303.90 212.80 L311.40 220.30" stroke="#6c6860" stroke-width="2.8" stroke-linecap="round" fill="none"/>
<path d="M308.90 222.80 L313.90 217.80" stroke="#6c6860" stroke-width="2.8" stroke-linecap="round" fill="none"/>
<path d="M321.10 193.90 L328.90 201.70" stroke="#6c6860" stroke-width="2.8" stroke-linecap="round" fill="none"/>
<path d="M318.30 196.70 L323.90 192.20" stroke="#6c6860" stroke-width="2.8" stroke-linecap="round" fill="none"/>
<path d="M318.30 214.40 L326.70 206.70" stroke="#6c6860" stroke-width="2.8" stroke-linecap="round" fill="none"/>
<path d="M322.80 205.00 L328.30 209.40" stroke="#6c6860" stroke-width="2.8" stroke-linecap="round" fill="none"/>
<path d="M274.00 216.00 L287.50 216.00" stroke="#6c6860" stroke-width="2.8" stroke-linecap="round" fill="none"/>
<path d="M274.00 220.50 L287.50 220.50" stroke="#6c6860" stroke-width="2.8" stroke-linecap="round" fill="none"/>
<path d="M281.00 130.50 L291.00 122.00" stroke="#6c6860" stroke-width="2.8" stroke-linecap="round" fill="none"/>
<path d="M283.00 132.50 L293.00 124.00" stroke="#6c6860" stroke-width="2.8" stroke-linecap="round" fill="none"/>
<path d="M230.50 186.50 L239.50 176.00" stroke="#6c6860" stroke-width="2.8" stroke-linecap="round" fill="none"/>
<path d="M233.00 188.00 L242.00 177.50" stroke="#6c6860" stroke-width="2.8" stroke-linecap="round" fill="none"/>
<path d="M246.70 218.30 L251.70 223.30" stroke="#c2beb5" stroke-width="1.1" stroke-linecap="round" fill="none"/>
<path d="M249.20 220.80 L257.20 212.80" stroke="#c2beb5" stroke-width="1.1" stroke-linecap="round" fill="none"/>
<path d="M303.90 212.80 L311.40 220.30" stroke="#c2beb5" stroke-width="1.1" stroke-linecap="round" fill="none"/>
<path d="M308.90 222.80 L313.90 217.80" stroke="#c2beb5" stroke-width="1.1" stroke-linecap="round" fill="none"/>
<path d="M321.10 193.90 L328.90 201.70" stroke="#c2beb5" stroke-width="1.1" stroke-linecap="round" fill="none"/>
<path d="M318.30 196.70 L323.90 192.20" stroke="#c2beb5" stroke-width="1.1" stroke-linecap="round" fill="none"/>
<path d="M318.30 214.40 L326.70 206.70" stroke="#c2beb5" stroke-width="1.1" stroke-linecap="round" fill="none"/>
<path d="M322.80 205.00 L328.30 209.40" stroke="#c2beb5" stroke-width="1.1" stroke-linecap="round" fill="none"/>
<path d="M274.00 216.00 L287.50 216.00" stroke="#c2beb5" stroke-width="1.1" stroke-linecap="round" fill="none"/>
<path d="M274.00 220.50 L287.50 220.50" stroke="#c2beb5" stroke-width="1.1" stroke-linecap="round" fill="none"/>
<path d="M281.00 130.50 L291.00 122.00" stroke="#c2beb5" stroke-width="1.1" stroke-linecap="round" fill="none"/>
<path d="M283.00 132.50 L293.00 124.00" stroke="#c2beb5" stroke-width="1.1" stroke-linecap="round" fill="none"/>
<path d="M230.50 186.50 L239.50 176.00" stroke="#c2beb5" stroke-width="1.1" stroke-linecap="round" fill="none"/>
<path d="M233.00 188.00 L242.00 177.50" stroke="#c2beb5" stroke-width="1.1" stroke-linecap="round" fill="none"/>
<circle cx="223" cy="229" r="5.6" fill="none" stroke="#47a9e0" stroke-width="1"/>
<rect x="245.5" y="245" width="47.5" height="9.5" fill="#ffffff" stroke="#555" stroke-width="0.6"/>
</g>
<svg x="457" y="76" width="443" height="193" viewBox="457 76 443 193">
<polygon points="565.88,135.93 566.05,134.89 566.45,133.88 567.05,132.92 567.85,132.04 575.90,123.91 576.76,123.22 577.76,122.64 578.86,122.18 580.05,121.85 639.18,109.08 640.42,108.89 641.68,108.84 642.93,108.93 644.14,109.17 645.29,109.55 646.33,110.05 647.25,110.67 648.03,111.38 653.02,117.12 653.71,118.02 654.20,119.00 673.72,170.20 673.99,171.22 674.04,172.27 674.04,189.52 673.87,190.56 673.47,191.57 672.87,192.53 672.07,193.41 671.09,194.19 669.96,194.85 668.71,195.37 667.36,195.75 596.96,210.95 595.55,211.17 594.12,211.22 592.70,211.12 591.32,210.84 590.02,210.42 588.83,209.85 587.79,209.15 586.90,208.33 586.21,207.43 585.72,206.45 566.20,155.25 565.93,154.23 565.88,153.18" fill="#55534f" stroke="#2b2b2b" stroke-width="1.2" stroke-linejoin="round"/>
<polygon points="585.72,206.45 586.21,207.43 586.21,190.18 585.72,189.20" fill="#696969" stroke="#696969" stroke-width="0.4"/>
<polygon points="585.72,189.20 586.21,190.18 591.28,173.02 590.85,172.16" fill="#939290" stroke="#939290" stroke-width="0.4"/>
<polygon points="586.21,207.43 586.90,208.33 586.90,191.08 586.21,190.18" fill="#666665" stroke="#666665" stroke-width="0.4"/>
<polygon points="586.21,190.18 586.90,191.08 591.89,173.82 591.28,173.02" fill="#9b9a97" stroke="#9b9a97" stroke-width="0.4"/>
<polygon points="586.90,208.33 587.79,209.15 587.79,191.90 586.90,191.08" fill="#636361" stroke="#636361" stroke-width="0.4"/>
<polygon points="586.90,191.08 587.79,191.90 592.67,174.53 591.89,173.82" fill="#a3a29f" stroke="#a3a29f" stroke-width="0.4"/>
<polygon points="587.79,209.15 588.83,209.85 588.83,192.60 587.79,191.90" fill="#605f5d" stroke="#605f5d" stroke-width="0.4"/>
<polygon points="587.79,191.90 588.83,192.60 593.59,175.15 592.67,174.53" fill="#abaaa6" stroke="#abaaa6" stroke-width="0.4"/>
<polygon points="588.83,209.85 590.02,210.42 590.02,193.17 588.83,192.60" fill="#5d5c59" stroke="#5d5c59" stroke-width="0.4"/>
<polygon points="588.83,192.60 590.02,193.17 594.63,175.65 593.59,175.15" fill="#b3b2ad" stroke="#b3b2ad" stroke-width="0.4"/>
<polygon points="590.02,210.42 591.32,210.84 591.32,193.59 590.02,193.17" fill="#5a5955" stroke="#5a5955" stroke-width="0.4"/>
<polygon points="590.02,193.17 591.32,193.59 595.78,176.03 594.63,175.65" fill="#b1afaa" stroke="#b1afaa" stroke-width="0.4"/>
<polygon points="591.32,210.84 592.70,211.12 592.70,193.87 591.32,193.59" fill="#575652" stroke="#575652" stroke-width="0.4"/>
<polygon points="591.32,193.59 592.70,193.87 596.99,176.27 595.78,176.03" fill="#a3a19d" stroke="#a3a19d" stroke-width="0.4"/>
<polygon points="592.70,211.12 594.12,211.22 594.12,193.97 592.70,193.87" fill="#555350" stroke="#555350" stroke-width="0.4"/>
<polygon points="592.70,193.87 594.12,193.97 598.24,176.36 596.99,176.27" fill="#969490" stroke="#969490" stroke-width="0.4"/>
<polygon points="594.12,211.22 595.55,211.17 595.55,193.92 594.12,193.97" fill="#52504d" stroke="#52504d" stroke-width="0.4"/>
<polygon points="594.12,193.97 595.55,193.92 599.50,176.31 598.24,176.36" fill="#898783" stroke="#898783" stroke-width="0.4"/>
<polygon points="595.55,211.17 596.96,210.95 596.96,193.70 595.55,193.92" fill="#4f4d4a" stroke="#4f4d4a" stroke-width="0.4"/>
<polygon points="595.55,193.92 596.96,193.70 600.74,176.12 599.50,176.31" fill="#7b7976" stroke="#7b7976" stroke-width="0.4"/>
<polygon points="596.96,210.95 667.36,195.75 667.36,178.50 596.96,193.70" fill="#4e4c49" stroke="#4e4c49" stroke-width="0.4"/>
<polygon points="596.96,193.70 667.36,178.50 659.87,163.35 600.74,176.12" fill="#757370" stroke="#757370" stroke-width="0.4"/>
<polygon points="667.36,195.75 668.71,195.37 668.71,178.12 667.36,178.50" fill="#4e4c49" stroke="#4e4c49" stroke-width="0.4"/>
<polygon points="667.36,178.50 668.71,178.12 661.06,163.02 659.87,163.35" fill="#757370" stroke="#757370" stroke-width="0.4"/>
<polygon points="668.71,195.37 669.96,194.85 669.96,177.60 668.71,178.12" fill="#4e4c49" stroke="#4e4c49" stroke-width="0.4"/>
<polygon points="668.71,178.12 669.96,177.60 662.16,162.56 661.06,163.02" fill="#757370" stroke="#757370" stroke-width="0.4"/>
<polygon points="669.96,194.85 671.09,194.19 671.09,176.94 669.96,177.60" fill="#4e4c49" stroke="#4e4c49" stroke-width="0.4"/>
<polygon points="669.96,177.60 671.09,176.94 663.16,161.98 662.16,162.56" fill="#757370" stroke="#757370" stroke-width="0.4"/>
<polygon points="671.09,194.19 672.07,193.41 672.07,176.16 671.09,176.94" fill="#4e4c49" stroke="#4e4c49" stroke-width="0.4"/>
<polygon points="671.09,176.94 672.07,176.16 664.02,161.29 663.16,161.98" fill="#757370" stroke="#757370" stroke-width="0.4"/>
<polygon points="672.07,193.41 672.87,192.53 672.87,175.28 672.07,176.16" fill="#4e4c49" stroke="#4e4c49" stroke-width="0.4"/>
<polygon points="672.07,176.16 672.87,175.28 664.72,160.52 664.02,161.29" fill="#757370" stroke="#757370" stroke-width="0.4"/>
<polygon points="672.87,192.53 673.47,191.57 673.47,174.32 672.87,175.28" fill="#4e4c49" stroke="#4e4c49" stroke-width="0.4"/>
<polygon points="672.87,175.28 673.47,174.32 665.25,159.68 664.72,160.52" fill="#757370" stroke="#757370" stroke-width="0.4"/>
<polygon points="673.47,191.57 673.87,190.56 673.87,173.31 673.47,174.32" fill="#4e4c49" stroke="#4e4c49" stroke-width="0.4"/>
<polygon points="673.47,174.32 673.87,173.31 665.60,158.79 665.25,159.68" fill="#757370" stroke="#757370" stroke-width="0.4"/>
<polygon points="673.87,190.56 674.04,189.52 674.04,172.27 673.87,173.31" fill="#4e4c49" stroke="#4e4c49" stroke-width="0.4"/>
<polygon points="673.87,173.31 674.04,172.27 665.75,157.87 665.60,158.79" fill="#757370" stroke="#757370" stroke-width="0.4"/>
<polygon points="674.04,172.27 673.99,171.22 665.71,156.95 665.75,157.87" fill="#757370" stroke="#757370" stroke-width="0.4"/>
<polygon points="673.99,171.22 673.72,170.20 665.47,156.05 665.71,156.95" fill="#757370" stroke="#757370" stroke-width="0.4"/>
<polygon points="673.72,170.20 654.20,119.00 649.07,113.04 665.47,156.05" fill="#757370" stroke="#757370" stroke-width="0.4"/>
<polygon points="654.20,119.00 653.71,118.02 648.64,112.18 649.07,113.04" fill="#757370" stroke="#757370" stroke-width="0.4"/>
<polygon points="653.71,118.02 653.02,117.12 648.03,111.38 648.64,112.18" fill="#757370" stroke="#757370" stroke-width="0.4"/>
<polygon points="567.85,132.04 567.05,132.92 575.20,124.68 575.90,123.91" fill="#8f8f8d" stroke="#8f8f8d" stroke-width="0.4"/>
<polygon points="567.05,132.92 566.45,133.88 574.67,125.52 575.20,124.68" fill="#8f8f8d" stroke="#8f8f8d" stroke-width="0.4"/>
<polygon points="566.45,133.88 566.05,134.89 574.32,126.41 574.67,125.52" fill="#8f8f8d" stroke="#8f8f8d" stroke-width="0.4"/>
<polygon points="566.05,134.89 565.88,135.93 574.17,127.33 574.32,126.41" fill="#8f8f8d" stroke="#8f8f8d" stroke-width="0.4"/>
<polygon points="565.88,153.18 565.93,154.23 565.93,136.98 565.88,135.93" fill="#6b6b6b" stroke="#6b6b6b" stroke-width="0.4"/>
<polygon points="565.88,135.93 565.93,136.98 574.21,128.25 574.17,127.33" fill="#8f8f8d" stroke="#8f8f8d" stroke-width="0.4"/>
<polygon points="565.93,154.23 566.20,155.25 566.20,138.00 565.93,136.98" fill="#6b6b6b" stroke="#6b6b6b" stroke-width="0.4"/>
<polygon points="565.93,136.98 566.20,138.00 574.45,129.15 574.21,128.25" fill="#8f8f8d" stroke="#8f8f8d" stroke-width="0.4"/>
<polygon points="566.20,155.25 585.72,206.45 585.72,189.20 566.20,138.00" fill="#6b6b6b" stroke="#6b6b6b" stroke-width="0.4"/>
<polygon points="566.20,138.00 585.72,189.20 590.85,172.16 574.45,129.15" fill="#8f8f8d" stroke="#8f8f8d" stroke-width="0.4"/>
<polygon points="590.85,172.16 591.28,173.02 591.89,173.82 592.67,174.53 593.59,175.15 594.63,175.65 595.78,176.03 596.99,176.27 598.24,176.36 599.50,176.31 600.74,176.12 659.87,163.35 661.06,163.02 662.16,162.56 663.16,161.98 664.02,161.29 664.72,160.52 665.25,159.68 665.60,158.79 665.75,157.87 665.71,156.95 665.47,156.05 649.07,113.04 648.64,112.18 648.03,111.38 647.25,110.67 646.33,110.05 645.29,109.55 644.14,109.17 642.93,108.93 641.68,108.84 640.42,108.89 639.18,109.08 580.05,121.85 578.86,122.18 577.76,122.64 576.76,123.22 575.90,123.91 575.20,124.68 574.67,125.52 574.32,126.41 574.17,127.33 574.21,128.25 574.45,129.15" fill="#a8997f" stroke="#2f2d2a" stroke-width="1"/>
<polyline points="565.88,135.93 565.93,136.98 566.20,138.00 585.72,189.20 586.21,190.18 586.90,191.08 587.79,191.90 588.83,192.60 590.02,193.17 591.32,193.59 592.70,193.87 594.12,193.97 595.55,193.92 596.96,193.70 667.36,178.50 668.71,178.12 669.96,177.60 671.09,176.94 672.07,176.16 672.87,175.28 673.47,174.32 673.87,173.31 674.04,172.27" fill="none" stroke="#262626" stroke-width="1"/>
<polyline points="565.88,153.18 565.93,154.23 566.20,155.25 585.72,206.45 586.21,207.43 586.90,208.33 587.79,209.15 588.83,209.85 590.02,210.42 591.32,210.84 592.70,211.12 594.12,211.22 595.55,211.17 596.96,210.95 667.36,195.75 668.71,195.37 669.96,194.85 671.09,194.19 672.07,193.41 672.87,192.53 673.47,191.57 673.87,190.56 674.04,189.52" fill="none" stroke="#262626" stroke-width="1.1"/>
<path d="M585.72 206.45 L585.72 189.20 L590.85 172.16" stroke="#262626" stroke-width="0.9" fill="none"/>
<path d="M596.96 210.95 L596.96 193.70 L600.74 176.12" stroke="#262626" stroke-width="0.9" fill="none"/>
<path d="M667.36 195.75 L667.36 178.50 L659.87 163.35" stroke="#262626" stroke-width="0.9" fill="none"/>
<path d="M566.20 155.25 L566.20 138.00 L574.45 129.15" stroke="#262626" stroke-width="0.9" fill="none"/>
<clipPath id="tfc"><polygon points="590.85,172.16 591.28,173.02 591.89,173.82 592.67,174.53 593.59,175.15 594.63,175.65 595.78,176.03 596.99,176.27 598.24,176.36 599.50,176.31 600.74,176.12 659.87,163.35 661.06,163.02 662.16,162.56 663.16,161.98 664.02,161.29 664.72,160.52 665.25,159.68 665.60,158.79 665.75,157.87 665.71,156.95 665.47,156.05 649.07,113.04 648.64,112.18 648.03,111.38 647.25,110.67 646.33,110.05 645.29,109.55 644.14,109.17 642.93,108.93 641.68,108.84 640.42,108.89 639.18,109.08 580.05,121.85 578.86,122.18 577.76,122.64 576.76,123.22 575.90,123.91 575.20,124.68 574.67,125.52 574.32,126.41 574.17,127.33 574.21,128.25 574.45,129.15"/></clipPath><g clip-path="url(#tfc)" stroke="#a0927a" stroke-width="0.7">
<line x1="546.16" y1="123.90" x2="651.76" y2="101.10"/>
<line x1="554.96" y1="122.00" x2="579.36" y2="186.00"/>
<line x1="548.60" y1="130.30" x2="654.20" y2="107.50"/>
<line x1="563.76" y1="120.10" x2="588.16" y2="184.10"/>
<line x1="551.04" y1="136.70" x2="656.64" y2="113.90"/>
<line x1="572.56" y1="118.20" x2="596.96" y2="182.20"/>
<line x1="553.48" y1="143.10" x2="659.08" y2="120.30"/>
<line x1="581.36" y1="116.30" x2="605.76" y2="180.30"/>
<line x1="555.92" y1="149.50" x2="661.52" y2="126.70"/>
<line x1="590.16" y1="114.40" x2="614.56" y2="178.40"/>
<line x1="558.36" y1="155.90" x2="663.96" y2="133.10"/>
<line x1="598.96" y1="112.50" x2="623.36" y2="176.50"/>
<line x1="560.80" y1="162.30" x2="666.40" y2="139.50"/>
<line x1="607.76" y1="110.60" x2="632.16" y2="174.60"/>
<line x1="563.24" y1="168.70" x2="668.84" y2="145.90"/>
<line x1="616.56" y1="108.70" x2="640.96" y2="172.70"/>
<line x1="565.68" y1="175.10" x2="671.28" y2="152.30"/>
<line x1="625.36" y1="106.80" x2="649.76" y2="170.80"/>
<line x1="568.12" y1="181.50" x2="673.72" y2="158.70"/>
<line x1="634.16" y1="104.90" x2="658.56" y2="168.90"/>
<line x1="570.56" y1="187.90" x2="676.16" y2="165.10"/>
<line x1="642.96" y1="103.00" x2="667.36" y2="167.00"/>
</g>
<line x1="516.00" y1="-105.10" x2="711.20" y2="406.90" stroke="#e84a4a" stroke-width="1.1" opacity="0.55"/>
<line x1="261.60" y1="226.90" x2="965.60" y2="74.90" stroke="#40c040" stroke-width="1.1" opacity="0.55"/>
<line x1="600.91" y1="117.62" x2="621.41" y2="171.38" stroke="#cc6a5a" stroke-width="1"/>
<line x1="585.44" y1="156.98" x2="659.36" y2="141.02" stroke="#6cb85a" stroke-width="1"/>
<polygon points="635.12,132.40 640.00,145.20 618.48,163.70 616.04,157.30 598.44,161.10 588.68,135.50 606.28,131.70 603.84,125.30" fill="none" stroke="#e0b060" stroke-width="2.3" stroke-opacity="0.55" stroke-linejoin="miter"/>
<polygon points="635.12,132.40 640.00,145.20 618.48,163.70 616.04,157.30 598.44,161.10 588.68,135.50 606.28,131.70 603.84,125.30" fill="none" stroke="#3a6ee0" stroke-width="1.1" stroke-linejoin="miter"/>
<path d="M592.32 134.68 L589.66 138.14" stroke="#6e6a62" stroke-width="2.4" stroke-linecap="round" fill="none" opacity="0.85"/>
<path d="M590.99 136.41 L598.50 139.42" stroke="#6e6a62" stroke-width="2.4" stroke-linecap="round" fill="none" opacity="0.85"/>
<path d="M592.32 134.68 L589.66 138.14" stroke="#b5b1a8" stroke-width="0.9" stroke-linecap="round" fill="none" opacity="0.85"/>
<path d="M590.99 136.41 L598.50 139.42" stroke="#b5b1a8" stroke-width="0.9" stroke-linecap="round" fill="none" opacity="0.85"/>
<path d="M604.15 154.23 L600.17 159.43" stroke="#6e6a62" stroke-width="2.4" stroke-linecap="round" fill="none" opacity="0.85"/>
<path d="M597.82 158.49 L602.51 160.37" stroke="#6e6a62" stroke-width="2.4" stroke-linecap="round" fill="none" opacity="0.85"/>
<path d="M604.15 154.23 L600.17 159.43" stroke="#b5b1a8" stroke-width="0.9" stroke-linecap="round" fill="none" opacity="0.85"/>
<path d="M597.82 158.49 L602.51 160.37" stroke="#b5b1a8" stroke-width="0.9" stroke-linecap="round" fill="none" opacity="0.85"/>
<path d="M615.42 158.96 L611.28 164.37" stroke="#6e6a62" stroke-width="2.4" stroke-linecap="round" fill="none" opacity="0.85"/>
<path d="M612.79 157.90 L617.25 160.18" stroke="#6e6a62" stroke-width="2.4" stroke-linecap="round" fill="none" opacity="0.85"/>
<path d="M615.42 158.96 L611.28 164.37" stroke="#b5b1a8" stroke-width="0.9" stroke-linecap="round" fill="none" opacity="0.85"/>
<path d="M612.79 157.90 L617.25 160.18" stroke="#b5b1a8" stroke-width="0.9" stroke-linecap="round" fill="none" opacity="0.85"/>
<path d="M603.12 160.09 L610.50 163.36" stroke="#6e6a62" stroke-width="2.4" stroke-linecap="round" fill="none" opacity="0.85"/>
<path d="M610.95 161.00 L608.84 164.64" stroke="#6e6a62" stroke-width="2.4" stroke-linecap="round" fill="none" opacity="0.85"/>
<path d="M603.12 160.09 L610.50 163.36" stroke="#b5b1a8" stroke-width="0.9" stroke-linecap="round" fill="none" opacity="0.85"/>
<path d="M610.95 161.00 L608.84 164.64" stroke="#b5b1a8" stroke-width="0.9" stroke-linecap="round" fill="none" opacity="0.85"/>
<path d="M597.61 143.74 L600.36 150.96" stroke="#6e6a62" stroke-width="2.4" stroke-linecap="round" fill="none" opacity="0.85"/>
<path d="M594.30 144.46 L597.05 151.68" stroke="#6e6a62" stroke-width="2.4" stroke-linecap="round" fill="none" opacity="0.85"/>
<path d="M597.61 143.74 L600.36 150.96" stroke="#b5b1a8" stroke-width="0.9" stroke-linecap="round" fill="none" opacity="0.85"/>
<path d="M594.30 144.46 L597.05 151.68" stroke="#b5b1a8" stroke-width="0.9" stroke-linecap="round" fill="none" opacity="0.85"/>
<path d="M639.32 137.63 L647.61 141.63" stroke="#6e6a62" stroke-width="2.4" stroke-linecap="round" fill="none" opacity="0.85"/>
<path d="M638.25 139.02 L646.54 143.02" stroke="#6e6a62" stroke-width="2.4" stroke-linecap="round" fill="none" opacity="0.85"/>
<path d="M639.32 137.63 L647.61 141.63" stroke="#b5b1a8" stroke-width="0.9" stroke-linecap="round" fill="none" opacity="0.85"/>
<path d="M638.25 139.02 L646.54 143.02" stroke="#b5b1a8" stroke-width="0.9" stroke-linecap="round" fill="none" opacity="0.85"/>
<path d="M604.66 125.72 L614.22 128.87" stroke="#6e6a62" stroke-width="2.4" stroke-linecap="round" fill="none" opacity="0.85"/>
<path d="M604.07 127.30 L613.63 130.44" stroke="#6e6a62" stroke-width="2.4" stroke-linecap="round" fill="none" opacity="0.85"/>
<path d="M604.66 125.72 L614.22 128.87" stroke="#b5b1a8" stroke-width="0.9" stroke-linecap="round" fill="none" opacity="0.85"/>
<path d="M604.07 127.30 L613.63 130.44" stroke="#b5b1a8" stroke-width="0.9" stroke-linecap="round" fill="none" opacity="0.85"/>
<circle cx="584.22" cy="128.29" r="4.6" fill="none" stroke="#47a9e0" stroke-width="1"/>
<ellipse cx="613.60" cy="150.90" rx="5.2" ry="4" fill="none" stroke="#6a6660" stroke-width="1.5" opacity="0.8"/>
</svg>
<defs><linearGradient id="gt1" x1="0" y1="0" x2="0" y2="1"><stop offset="0" stop-color="#cfccc6"/><stop offset="1" stop-color="#aba9a3"/></linearGradient><linearGradient id="gt2" x1="0" y1="0" x2="0" y2="1"><stop offset="0" stop-color="#dedbd5"/><stop offset="1" stop-color="#cdcac4"/></linearGradient><linearGradient id="gs1" x1="0" y1="0" x2="1" y2="0"><stop offset="0" stop-color="#6f6d69"/><stop offset="0.6" stop-color="#9a978f"/><stop offset="1" stop-color="#6f6d69"/></linearGradient><linearGradient id="gw1" x1="0" y1="0" x2="1" y2="0"><stop offset="0" stop-color="#7c7b77"/><stop offset="0.5" stop-color="#a9a7a2"/><stop offset="1" stop-color="#8a8985"/></linearGradient></defs>
<line x1="0" y1="324.3" x2="454" y2="324.3" stroke="#c8504a" stroke-width="1.3"/>
<rect x="165.00" y="346.40" width="112.00" height="33.60" fill="#8c8c88" stroke="#262626" stroke-width="1.1"/>
<rect x="165.50" y="346.90" width="10.70" height="32.60" fill="url(#gw1)"/>
<rect x="265.80" y="346.90" width="10.70" height="32.60" fill="url(#gw1)"/>
<path d="M176.20 346.40 V380.00 M265.80 346.40 V380.00" stroke="#262626" stroke-width="1.1"/>
<polygon points="165.00,346.40 277.00,346.40 268.49,324.00 173.51,324.00" fill="#77756f" stroke="#262626" stroke-width="1.1"/>
<polygon points="176.20,346.40 265.80,346.40 258.63,324.00 183.37,324.00" fill="url(#gt1)" stroke="#262626" stroke-width="1.1"/>
<polygon points="165.00,346.40 176.20,346.40 183.37,324.00 173.51,324.00" fill="url(#gs1)" stroke="#262626" stroke-width="0.8800000000000001"/>
<polygon points="265.80,346.40 277.00,346.40 268.49,324.00 258.63,324.00" fill="url(#gs1)" stroke="#262626" stroke-width="0.8800000000000001"/>
<line x1="181.80" y1="324.00" x2="250.12" y2="324.00" stroke="#3a70dc" stroke-width="1.2"/>
<circle cx="185.4" cy="324.2" r="6" fill="none" stroke="#47a9e0" stroke-width="1"/>
<line x1="457" y1="351.3" x2="900" y2="351.3" stroke="#666" stroke-width="1.2"/>
<rect x="574.20" y="365.30" width="69.50" height="20.85" fill="#72716c" stroke="#262626" stroke-width="1"/>
<rect x="574.70" y="365.80" width="6.45" height="19.85" fill="url(#gw1)"/>
<rect x="636.75" y="365.80" width="6.45" height="19.85" fill="url(#gw1)"/>
<path d="M581.15 365.30 V386.15 M636.75 365.30 V386.15" stroke="#262626" stroke-width="1"/>
<polygon points="574.20,365.30 643.70,365.30 638.42,351.40 579.48,351.40" fill="#6a6863" stroke="#262626" stroke-width="1"/>
<polygon points="581.15,365.30 636.75,365.30 632.30,351.40 585.60,351.40" fill="url(#gt2)" stroke="#262626" stroke-width="1"/>
<polygon points="574.20,365.30 581.15,365.30 585.60,351.40 579.48,351.40" fill="url(#gs1)" stroke="#262626" stroke-width="0.8"/>
<polygon points="636.75,365.30 643.70,365.30 638.42,351.40 632.30,351.40" fill="url(#gs1)" stroke="#262626" stroke-width="0.8"/>
<line x1="584.62" y1="351.40" x2="627.02" y2="351.40" stroke="#3a70dc" stroke-width="1.2"/>
<circle cx="586.5" cy="351.4" r="5.8" fill="none" stroke="#47a9e0" stroke-width="1"/>
</svg>
<div class="a" id="vsep"></div><div class="a" id="hsep"></div>
<div class="a" id="tline"></div><div class="a" id="tbar"></div>
<!-- active viewport border -->
<div class="a" style="left:0;top:74.8px;width:453.7px;height:1.6px;background:#5a5a5a"></div>
<div class="a" style="left:452.1px;top:74.8px;width:1.6px;height:194.2px;background:#5a5a5a;border-radius:0 1px 1px 0"></div>
<div class="a" style="left:0;top:267.6px;width:453.7px;height:1.4px;background:#5a5a5a"></div>
<div class="a" style="left:0;top:77px;width:1px;height:191px;background:#d6d6d6"></div>
<!-- label on sketch -->
<div class="a" style="left:246.5px;top:245.3px;font-size:8px;line-height:9px;color:#000;font-weight:bold;white-space:nowrap;width:47px;overflow:hidden">最初の点を配</div>
<!-- 25 rotated -->
<div class="a" style="left:386.5px;top:177px;font-size:10px;line-height:10px;color:#7a7a7a;transform:rotate(90deg);transform-origin:center">25</div>
<!-- view cube -->
<div class="a" style="left:429px;top:85.3px;width:15px;height:15px;background:#ececec;border:1px solid #bdbdbd;box-shadow:0 0 1.5px #aaa"></div>
<div class="a" style="left:431.5px;top:87.5px;font-size:9px;line-height:10px;color:#666">上</div>
<svg class="a" style="left:426px;top:82px" width="22" height="22"><circle cx="3" cy="3" r="1" fill="#5c5"/><circle cx="19" cy="6" r="1" fill="#e66"/><circle cx="4" cy="19.5" r="1" fill="#59e"/></svg>
<!-- browser -->
<div class="a pnl" style="left:2px;top:78px;width:198px;height:16.5px"></div>
<div class="a" style="left:7px;top:81px;font-size:7px;line-height:9px;color:#222;letter-spacing:-2px">◀◀</div>
<div class="a tr" style="left:18px;top:82px;color:#555;font-weight:normal;transform:scaleX(0.75);transform-origin:0 0">ブラウザ</div>
<svg class="a" style="left:0;top:0" width="460" height="200">
<circle cx="188.5" cy="86.3" r="3.2" fill="#222"/><rect x="186.6" y="85.8" width="3.8" height="1" fill="#fff"/>
<path d="M197 82 V91" stroke="#999" stroke-width="1"/>
<!-- tree -->
<rect x="25.7" y="99.2" width="88.6" height="11" fill="#e9e9e9"/>
<path d="M13 108.5 L20.5 101.5 V108.5 Z" fill="none" stroke="#333" stroke-width="1.1"/><path d="M16.5 108 L20 104.5 V108 Z" fill="#333"/>
<path d="M28.3 104.8 Q33.3 99.6 38.3 104.8 Q33.3 110 28.3 104.8 Z" fill="none" stroke="#959595" stroke-width="1.3"/>
<circle cx="33.3" cy="104.8" r="1.3" fill="none" stroke="#959595" stroke-width="1.3"/>
<rect x="42" y="99.5" width="57.5" height="10.5" fill="#7b7b7b"/>
<path d="M43.5 102 L46 100 H52.5 V107.5 L50 109.5 H43.5 Z" fill="#e6e6e6" stroke="#444" stroke-width="0.6"/><path d="M43.5 102 H50 L52.5 100 M50 102 V109.5" stroke="#444" stroke-width="0.6" fill="none"/>
<circle cx="106.2" cy="104.8" r="3.8" fill="#fff" stroke="#333" stroke-width="0.9"/><circle cx="106.2" cy="104.8" r="1.6" fill="#222"/>
<rect x="38.4" y="114" width="77.2" height="12.8" fill="#e9e9e9"/>
<rect x="38.4" y="129.8" width="58.2" height="13.1" fill="#e9e9e9"/>
<rect x="38.4" y="145.5" width="58.6" height="13.1" fill="#e9e9e9"/>
<rect x="38.4" y="161.5" width="58.6" height="13.1" fill="#e9e9e9"/>
<rect x="38.4" y="177" width="63.1" height="13.5" fill="#e9e9e9"/>
<g fill="none" stroke="#333" stroke-width="1.1">
<path d="M26 116.5 L31.5 120.6 L26 124.7 Z"/>
<path d="M26 132.4 L31.5 136.5 L26 140.6 Z"/>
<path d="M26 148 L31.5 152 L26 156 Z"/>
<path d="M26 164.2 L31.5 168.2 L26 172.2 Z"/>
<path d="M26 179.5 L31.5 183.5 L26 187.5 Z"/>
</g>
<g transform="translate(44.7 120.6)"><circle r="3.3" fill="#7a7a7a"/><g stroke="#7a7a7a" stroke-width="1.7"><path d="M0 -5 V5 M-5 0 H5 M-3.5 -3.5 L3.5 3.5 M-3.5 3.5 L3.5 -3.5"/></g><circle r="1.5" fill="#f0f0f0"/></g>
<g fill="#8a8a8a">
<path d="M40.3 132.5 H44 L45 133.7 H50.3 V141.2 H40.3 Z"/>
<path d="M56.3 147.8 H60 L61 149 H66.8 V156.3 H56.3 Z"/>
<path d="M56.3 164 H60 L61 165.2 H66.8 V172.5 H56.3 Z"/>
<path d="M56.3 179.3 H60 L61 180.5 H66.8 V187.8 H56.3 Z"/>
</g>
<g fill="none" stroke="#959595" stroke-width="1.3">
<path d="M40.3 168.2 Q45.2 163.2 50.1 168.2 Q45.2 173.2 40.3 168.2 Z"/>
<path d="M40.3 183.5 Q45.2 178.5 50.1 183.5 Q45.2 188.5 40.3 183.5 Z"/>
<circle cx="45.2" cy="168.2" r="1.3"/><circle cx="45.2" cy="183.5" r="1.3"/>
</g>
<g fill="none" stroke="#cfcfcf" stroke-width="0.9">
<path d="M40.5 152 Q45.2 147.8 50 152 Q45.2 156.2 40.5 152 Z"/><path d="M41 148 L49 156"/>
</g>
</svg>
<div class="a tr" style="left:63.5px;top:101px;color:#fff;font-weight:bold;font-size:7px;letter-spacing:0.5px">(未保存)</div>
<div class="a tr" style="left:59.4px;top:116.2px;transform:scaleX(0.81);transform-origin:0 0">ドキュメントの設定</div>
<div class="a tr" style="left:58.5px;top:132px;transform:scaleX(0.86);transform-origin:0 0">ビュー管理</div>
<div class="a tr" style="left:75px;top:147.6px">原点</div>
<div class="a tr" style="left:75px;top:163.8px;transform:scaleX(0.71);transform-origin:0 0">ボディ</div>
<div class="a tr" style="left:75px;top:179px;transform:scaleX(0.71);transform-origin:0 0">スケッチ</div>
<!-- TR labels -->
<div class="a" style="left:556.5px;top:153px;font-size:9px;line-height:9px;color:#808080">25</div>
<div class="a" style="left:513px;top:162.5px;font-size:9px;line-height:9px;color:#808080">50</div>
<div class="a" style="left:469px;top:172px;font-size:9px;line-height:9px;color:#808080">75</div>
<div class="a" style="left:627px;top:182.5px;font-size:9px;line-height:9px;color:#555">25</div>
<div class="a" style="left:643.2px;top:215.5px;font-size:9px;line-height:9px;color:#808080">50</div>
<div class="a" style="left:655.8px;top:248.5px;font-size:9px;line-height:9px;color:#808080">75</div>
<!-- sketch palette -->
<div class="a pnl" style="left:732.4px;top:78.4px;width:164px;height:15.2px"></div>
<svg class="a" style="left:720px;top:76px" width="180" height="20">
<path d="M14 5.5 V14.5 M15.8 5.5 V14.5" stroke="#b5b5b5" stroke-width="0.7"/>
<circle cx="23" cy="10.3" r="3.2" fill="#222"/><path d="M21.2 10.3 H24.8 M23 8.5 V12.1" stroke="#fff" stroke-width="0.9"/>
<path d="M164 7.5 L167.5 10.3 L164 13 Z M168 7.5 L171.5 10.3 L168 13 Z" fill="#222"/>
</svg>
<div class="a tr" style="left:748px;top:81.5px;color:#444;font-weight:normal;transform:scaleX(0.7);transform-origin:0 0">スケッチ　パレット</div>
<!-- comments -->
<div class="a pnl" style="left:2px;top:413.3px;width:195px;height:15.6px"></div>
<div class="a tr" style="left:17.8px;top:416px;color:#444;transform:scaleX(0.75);transform-origin:0 0">コメント</div>
<svg class="a" style="left:0;top:405px" width="460" height="30">
<circle cx="188.8" cy="16" r="3" fill="#222"/><path d="M187.2 16 H190.4 M188.8 14.4 V17.6" stroke="#fff" stroke-width="0.9"/>
<path d="M196.5 11 L198 16 L196.5 21" stroke="#999" stroke-width="0.8" fill="none"/>
</svg>
<!-- nav toolbar -->
<div class="a" style="left:376.7px;top:413.8px;width:166px;height:15.1px;background:#efefef"></div>
<svg class="a" style="left:370px;top:410px" width="180" height="22">
<g stroke="#333" stroke-width="1" fill="none">
<ellipse cx="14" cy="11.5" rx="4.5" ry="2"/><path d="M14 5.5 V17"/>
<path d="M13 5.5 L14 4 L15 5.5 M13 17 L14 18.5 L15 17"/>
</g>
<path d="M21.5 10 H25 L23.25 12 Z" fill="#333"/>
<rect x="30.5" y="9" width="10" height="8" rx="1.5" fill="none" stroke="#444" stroke-width="1"/>
<path d="M32.5 12.5 H38.5 M33 9 L35 6.5 M38 9 L36 6.5" stroke="#444" stroke-width="0.9"/>
<path d="M50 17.5 L47 13 V10 M49 11.5 V6.5 M51 11 V5.5 M53 11 V6 M55 11.5 V8 V14 L53.5 17.5 Z" fill="none" stroke="#444" stroke-width="0.9"/>
<circle cx="64" cy="11" r="3.5" fill="none" stroke="#333" stroke-width="1.1"/><path d="M66.5 13.5 L69 16" stroke="#333" stroke-width="1.5"/>
<path d="M70 6 V9 M68.5 7.5 H71.5" stroke="#333" stroke-width="0.8"/>
<circle cx="82" cy="11" r="4" fill="none" stroke="#333" stroke-width="1.1" stroke-dasharray="2 1"/><path d="M85 14 L88 17" stroke="#333" stroke-width="1.5"/>
<path d="M91.5 10 H95 L93.25 12 Z" fill="#333"/>
<rect x="107.5" y="7" width="9.5" height="7.5" fill="#6a9ad0" stroke="#444" stroke-width="0.9"/><path d="M110 16.5 H114.5" stroke="#444" stroke-width="1.2"/>
<path d="M118.5 10 H122 L120.25 12 Z" fill="#333"/>
<rect x="127.5" y="6.5" width="10" height="10" fill="#9a9a9a" stroke="#666" stroke-width="0.7"/>
<path d="M127.5 9.8 H137.5 M127.5 13.1 H137.5 M130.8 6.5 V16.5 M134.1 6.5 V16.5" stroke="#c9c9c9" stroke-width="0.5"/>
<path d="M139 10 H142.5 L140.75 12 Z" fill="#333"/>
<rect x="147.5" y="6.5" width="4.5" height="4.5" fill="#5b8fd0"/><rect x="153" y="6.5" width="4.5" height="4.5" fill="#5b8fd0"/>
<rect x="147.5" y="12" width="4.5" height="4.5" fill="#5b8fd0"/><rect x="153" y="12" width="4.5" height="4.5" fill="#5b8fd0"/>
<path d="M159.5 10 H163 L161.25 12 Z" fill="#333"/>
</svg>
<!-- timeline -->
<svg class="a" style="left:0;top:434px" width="900" height="31">
<g fill="#333">
<rect x="6" y="10.5" width="1.8" height="9"/><path d="M15 10.5 V19.5 L8.5 15 Z"/>
<path d="M27 10.5 V19.5 L22.5 15 Z"/><rect x="28" y="12" width="2.5" height="6"/>
<path d="M40 10.5 V19.5 L47 15 Z"/>
<rect x="55" y="12" width="2.5" height="6"/><path d="M58.5 10.5 V19.5 L63 15 Z"/>
<path d="M73 10.5 V19.5 L79.5 15 Z"/><rect x="79.5" y="10.5" width="1.8" height="9"/>
</g>
<path d="M96 11 L99 9 H106.5 V17.5 L104 19.5 H96 Z" fill="#3a9be0"/><path d="M96 11 L99 9 H106.5 L104 11 Z" fill="#8cc8f0"/><path d="M104 11 L106.5 9 V17.5 L104 19.5 Z" fill="#2276b8"/>
<path d="M112 10.5 L114.5 8.5 H120.5 V17 L118 19 H112 Z" fill="#3a9be0"/><path d="M112 10.5 L114.5 8.5 H120.5 L118 10.5 Z" fill="#8cc8f0"/><path d="M121.5 9 V17.5" stroke="#555" stroke-width="0.8"/>
<path d="M127.5 19 V10 H132 A5.5 5.5 0 0 1 137.5 15.5 V19 Z" fill="#dadada" stroke="#777" stroke-width="0.9"/>
<rect x="144" y="10" width="8.5" height="8.5" fill="none" stroke="#3a9be0" stroke-width="1" stroke-dasharray="1.5 1"/>
<path d="M149.5 17 L153 13" stroke="#e06020" stroke-width="1.5"/>
<path d="M152.5 5.5 H159.5 L157 9 V25 H155 V9 Z" fill="#444"/>
<path d="M101.5 22.5 V25.5 H148 V22.5 M117 22.5 V25.5 M132.5 22.5 V25.5" stroke="#aaa" stroke-width="0.8" fill="none"/>
<g transform="translate(885.6 15.2)">
<circle r="3.6" fill="none" stroke="#777" stroke-width="2.2"/>
<g stroke="#777" stroke-width="1.8"><path d="M0 -5.5 V5.5 M-5.5 0 H5.5 M-3.9 -3.9 L3.9 3.9 M-3.9 3.9 L3.9 -3.9"/></g>
<circle r="1.6" fill="#f1f1f1"/>
</g>
</svg>

<svg class="a" style="left:800px;top:20px" width="100" height="70"><rect x="10" y="11" width="68" height="49.6" fill="none" stroke="#ff0000" stroke-width="4.3"/></svg>

</body></html>
